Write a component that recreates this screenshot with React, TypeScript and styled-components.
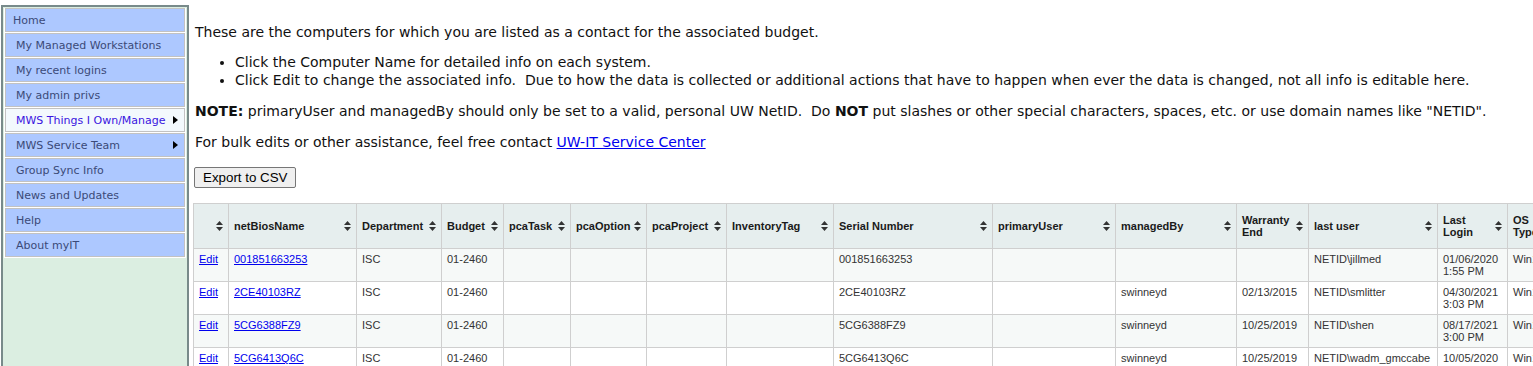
import React from 'react';
import styled, { createGlobalStyle } from 'styled-components';

const GlobalStyle = createGlobalStyle`
  html, body {
    margin: 0;
    padding: 0;
    background: #fff;
  }
`;

const Page = styled.div`
  display: flex;
  align-items: stretch;
  padding: 5px 0 0 1px;
  min-height: 400px;
  width: max-content;
`;

const Sidebar = styled.div`
  width: 182px;
  flex: none;
  background-color: #dbeee1;
  border: 2px solid #788a8a;
  border-bottom: none;
  padding: 0 1px;
`;

const Menu = styled.ul`
  list-style: none;
  margin: 0;
  padding: 0;
  background: #fff;
  border-bottom: 1px solid #fff;
`;

const MenuItem = styled.li<{ $active?: boolean; $indent?: number }>`
  height: 22px;
  margin: 1px 1px 0 1px;
  border: 1px solid #c2c2c2;
  background-color: ${(p) => (p.$active ? '#f3f9fd' : '#adc8ff')};
  color: ${(p) => (p.$active ? '#3914e0' : '#3b4a78')};
  font-family: 'DejaVu Sans', Verdana, sans-serif;
  font-size: 11px;
  display: flex;
  align-items: center;
  justify-content: space-between;
  padding: 0 6px 0 ${(p) => p.$indent ?? 10}px;
  cursor: pointer;
  white-space: nowrap;
`;

const Arrow = styled.span`
  width: 0;
  height: 0;
  border-top: 4px solid transparent;
  border-bottom: 4px solid transparent;
  border-left: 5px solid #000;
`;

const Main = styled.div`
  padding: 18px 0 0 6px;
  font-family: 'DejaVu Sans', Verdana, sans-serif;
  font-size: 14px;
  color: #111;
`;

const Para = styled.p<{ $gap?: number }>`
  margin: 0 0 ${(p) => p.$gap ?? 13}px 0;
  line-height: 18px;
  white-space: nowrap;
`;

const Bullets = styled.ul`
  margin: 0 0 13px 0;
  padding-left: 40px;
  line-height: 18px;
  white-space: nowrap;
`;

const Link = styled.a`
  color: #0000ee;
  text-decoration: underline;
`;

const ExportButton = styled.button`
  font-family: 'Liberation Sans', Arial, sans-serif;
  font-size: 13.33px;
  height: 21px;
  padding: 0 8px;
  margin: 3px 0 15px -1px;
  background: #efefef;
  border: 1px solid #767676;
  border-radius: 2px;
  color: #000;
`;

const Table = styled.table`
  border-collapse: collapse;
  table-layout: fixed;
  margin-left: -2px;
  font-family: 'Liberation Sans', Arial, sans-serif;
  font-size: 11px;
`;

const HeadCell = styled.th`
  height: 44px;
  padding: 0 5px;
  background: #e6eeee;
  border: 1px solid #cfcfcf;
  color: #1a1a1a;
  font-weight: bold;
  text-align: left;
  line-height: 12px;
  vertical-align: middle;
`;

const HeadInner = styled.div<{ $iconOnly?: boolean }>`
  display: flex;
  align-items: center;
  justify-content: ${(p) => (p.$iconOnly ? 'flex-end' : 'space-between')};
  gap: 3px;
`;

const Row = styled.tr<{ $odd: boolean }>`
  background: ${(p) => (p.$odd ? '#f6f9f8' : '#fff')};
`;

const Cell = styled.td`
  height: 24px;
  padding: 4px 5px;
  border: 1px solid #cfcfcf;
  color: #333;
  line-height: 12px;
  vertical-align: top;
  overflow: hidden;
  white-space: normal;
`;

const SortIcon = () => (
  <svg width="7" height="10" viewBox="0 0 7 10" style={{ flex: 'none' }}>
    <path d="M3.5 0 L7 4 L0 4 Z" fill="#333" />
    <path d="M0 6 L7 6 L3.5 10 Z" fill="#333" />
  </svg>
);

const menu = [
  { label: 'Home', indent: 7 },
  { label: 'My Managed Workstations' },
  { label: 'My recent logins' },
  { label: 'My admin privs' },
  { label: 'MWS Things I Own/Manage', active: true, arrow: true },
  { label: 'MWS Service Team', arrow: true },
  { label: 'Group Sync Info' },
  { label: 'News and Updates' },
  { label: 'Help' },
  { label: 'About myIT' },
];

const columns: { label: string; width: number }[] = [
  { label: '', width: 35 },
  { label: 'netBiosName', width: 128 },
  { label: 'Department', width: 85 },
  { label: 'Budget', width: 62 },
  { label: 'pcaTask', width: 67 },
  { label: 'pcaOption', width: 76 },
  { label: 'pcaProject', width: 80 },
  { label: 'InventoryTag', width: 107 },
  { label: 'Serial Number', width: 159 },
  { label: 'primaryUser', width: 123 },
  { label: 'managedBy', width: 121 },
  { label: 'Warranty End', width: 72 },
  { label: 'last user', width: 129 },
  { label: 'Last Login', width: 70 },
  { label: 'OS Type', width: 60 },
];

const rows = [
  ['001851663253', 'ISC', '01-2460', '', '', '', '', '001851663253', '', '', '', 'NETID\\jillmed', '01/06/2020 1:55 PM', 'Win10'],
  ['2CE40103RZ', 'ISC', '01-2460', '', '', '', '', '2CE40103RZ', '', 'swinneyd', '02/13/2015', 'NETID\\smlitter', '04/30/2021 3:03 PM', 'Win10'],
  ['5CG6388FZ9', 'ISC', '01-2460', '', '', '', '', '5CG6388FZ9', '', 'swinneyd', '10/25/2019', 'NETID\\shen', '08/17/2021 3:00 PM', 'Win10'],
  ['5CG6413Q6C', 'ISC', '01-2460', '', '', '', '', '5CG6413Q6C', '', 'swinneyd', '10/25/2019', 'NETID\\wadm_gmccabe', '10/05/2020 9:12 AM', 'Win10'],
  ['5CG7134KJ2', 'ISC', '01-2460', '', '', '', '', '5CG7134KJ2', '', 'swinneyd', '04/11/2020', 'NETID\\swinneyd', '11/02/2021 8:41 AM', 'Win10'],
];

const App: React.FC = () => {
  return (
    <>
      <GlobalStyle />
      <Page>
        <Sidebar>
          <Menu>
            {menu.map((m) => (
              <MenuItem key={m.label} $active={m.active} $indent={m.indent}>
                <span>{m.label}</span>
                {m.arrow && <Arrow />}
              </MenuItem>
            ))}
          </Menu>
        </Sidebar>
        <Main>
          <Para $gap={12}>These are the computers for which you are listed as a contact for the associated budget.</Para>
          <Bullets>
            <li>Click the Computer Name for detailed info on each system.</li>
            <li>
              Click Edit to change the associated info.&nbsp; Due to how the data is collected or additional actions
              that have to happen when ever the data is changed, not all info is editable here.
            </li>
          </Bullets>
          <Para>
            <b>NOTE:</b> primaryUser and managedBy should only be set to a valid, personal UW NetID.&nbsp; Do <b>NOT</b>{' '}
            put slashes or other special characters, spaces, etc. or use domain names like "NETID".
          </Para>
          <Para>
            For bulk edits or other assistance, feel free contact <Link href="#">UW-IT Service Center</Link>
          </Para>
          <ExportButton>Export to CSV</ExportButton>
          <Table style={{ width: columns.reduce((s, c) => s + c.width, 0) }}>
            <colgroup>
              {columns.map((c, i) => (
                <col key={i} style={{ width: c.width }} />
              ))}
            </colgroup>
            <thead>
              <tr>
                {columns.map((c, i) => (
                  <HeadCell key={i}>
                    <HeadInner $iconOnly={!c.label}>
                      {c.label && <span>{c.label}</span>}
                      <SortIcon />
                    </HeadInner>
                  </HeadCell>
                ))}
              </tr>
            </thead>
            <tbody>
              {rows.map((r, i) => (
                <Row key={r[0]} $odd={i % 2 === 0}>
                  <Cell>
                    <Link href="#">Edit</Link>
                  </Cell>
                  <Cell>
                    <Link href="#">{r[0]}</Link>
                  </Cell>
                  {r.slice(1).map((v, j) => (
                    <Cell key={j}>{v}</Cell>
                  ))}
                </Row>
              ))}
            </tbody>
          </Table>
        </Main>
      </Page>
    </>
  );
};

export default App;
